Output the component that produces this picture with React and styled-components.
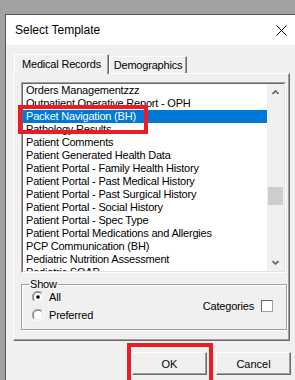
import React from "react";
import styled, { createGlobalStyle } from "styled-components";

const GlobalStyle = createGlobalStyle`
  html, body {
    margin: 0;
    padding: 0;
    overflow: hidden;
    background: #a2a2a2;
  }
  body {
    width: 295px;
    height: 380px;
  }
`;

const Page = styled.div`
  width: 295px;
  height: 380px;
  overflow: hidden;
  padding: 14px 0 0 5px;
  box-sizing: border-box;
`;

const Dialog = styled.div`
  width: 296px;
  height: 366px;
  border-top: 1px solid #555;
  border-left: 1px solid #555;
  background: #f0f0f0;
  display: flex;
  flex-direction: column;
  font-family: "Liberation Sans", Arial, sans-serif;
  color: #000;
`;

const TitleBar = styled.div`
  height: 30px;
  background: #fff;
  display: flex;
  align-items: center;
  justify-content: space-between;
  padding: 0 15px 0 9px;
`;

const Title = styled.span`
  font-size: 12px;
`;

const Body = styled.div`
  padding: 9px 0 0 7px;
  display: flex;
  flex-direction: column;
`;

const TabStrip = styled.div`
  display: flex;
  align-items: flex-end;
  height: 19px;
  padding-left: 1px;
  position: relative;
  z-index: 1;
`;

const Tab = styled.div`
  box-sizing: border-box;
  height: ${(p) => (p.$active ? "20px" : "17px")};
  margin-bottom: ${(p) => (p.$active ? "-1px" : "0")};
  width: ${(p) => p.$w}px;
  background: #f0f0f0;
  border-top: 1px solid #fff;
  border-left: 1px solid #fff;
  border-right: 1px solid #696969;
  box-shadow: inset -1px 0 #a0a0a0;
  font-size: 11px;
  letter-spacing: -0.2px;
  display: flex;
  align-items: center;
  justify-content: center;
  padding-bottom: ${(p) => (p.$active ? "2px" : "0")};
`;

const Panel = styled.div`
  box-sizing: border-box;
  width: 277px;
  height: 268px;
  border-top: 1px solid #fff;
  border-left: 1px solid #fff;
  border-right: 1px solid #696969;
  border-bottom: 1px solid #696969;
  box-shadow: inset -1px -1px #a0a0a0;
  padding: 8px 0 0 7px;
  display: flex;
  flex-direction: column;
`;

const ListBox = styled.div`
  position: relative;
  box-sizing: border-box;
  width: 265px;
  height: 191px;
  border-top: 1px solid #a0a0a0;
  border-left: 1px solid #a0a0a0;
  border-right: 1px solid #fff;
  border-bottom: 1px solid #fff;
`;

const ListInner = styled.div`
  box-sizing: border-box;
  height: 100%;
  border-top: 1px solid #696969;
  border-left: 1px solid #696969;
  border-right: 1px solid #e3e3e3;
  border-bottom: 1px solid #e3e3e3;
  background: #fff;
  display: flex;
`;

const Rows = styled.div`
  flex: 1;
  overflow: hidden;
`;

const Row = styled.div`
  height: 13px;
  line-height: 13px;
  padding-left: 3px;
  font-size: 11px;
  letter-spacing: -0.2px;
  white-space: nowrap;
  background: ${(p) => (p.$selected ? "#0078d7" : "transparent")};
  color: ${(p) => (p.$selected ? "#fff" : "#000")};
`;

const ScrollBar = styled.div`
  width: 17px;
  background: #f0f0f0;
  display: flex;
  flex-direction: column;
`;

const ScrollArrow = styled.div`
  height: 17px;
  display: flex;
  align-items: center;
  justify-content: center;
`;

const Track = styled.div`
  flex: 1;
`;

const Thumb = styled.div`
  margin: ${(p) => p.$top}px 1px 0;
  height: 18px;
  background: #cdcdcd;
`;

const Callout = styled.div`
  position: absolute;
  left: ${(p) => p.$x}px;
  top: ${(p) => p.$y}px;
  width: ${(p) => p.$w}px;
  height: ${(p) => p.$h}px;
  border: 4px solid #ed1c24;
  box-sizing: border-box;
  pointer-events: none;
`;

const GroupBox = styled.fieldset`
  box-sizing: border-box;
  width: 266px;
  height: 52px;
  margin: 5px 0 0 0;
  padding: 0;
  border: 1px solid #a0a0a0;
  box-shadow: inset 1px 1px #fff, 1px 1px #fff;
`;

const Legend = styled.legend`
  font-size: 11px;
  letter-spacing: -0.2px;
  line-height: 13px;
  padding: 0 1px;
  margin-left: 7px;
`;

const GroupContent = styled.div`
  height: 36px;
  margin-top: -3px;
  padding: 0 13px 0 10px;
  display: flex;
  align-items: center;
  justify-content: space-between;
`;

const RadioCol = styled.div`
  display: flex;
  flex-direction: column;
`;

const OptionRow = styled.label`
  height: 18px;
  display: flex;
  align-items: center;
  gap: 5px;
  font-size: 11px;
  letter-spacing: -0.2px;
`;

const CheckBox = styled.span`
  width: 12px;
  height: 12px;
  box-sizing: border-box;
  background: #fff;
  border-top: 1px solid #696969;
  border-left: 1px solid #696969;
  border-right: 1px solid #a0a0a0;
  border-bottom: 1px solid #a0a0a0;
`;

const CheckRow = styled.label`
  display: flex;
  align-items: center;
  gap: 7px;
  font-size: 11px;
  letter-spacing: -0.2px;
`;

const ButtonRow = styled.div`
  display: flex;
  gap: 9px;
  margin: 11px 0 0 119px;
`;

const ButtonWrap = styled.div`
  position: relative;
`;

const Button = styled.button`
  width: 75px;
  height: 23px;
  box-sizing: border-box;
  padding: 0;
  background: #f0f0f0;
  border-top: 1px solid #fff;
  border-left: 1px solid #fff;
  border-right: 1px solid #696969;
  border-bottom: 1px solid #696969;
  box-shadow: inset -1px -1px #a0a0a0;
  font-family: "Liberation Sans", Arial, sans-serif;
  font-size: 11px;
  color: #000;
`;

const Close = () => (
  <svg width="11" height="11" viewBox="0 0 11 11">
    <path d="M0.5 0.5 L10.5 10.5 M10.5 0.5 L0.5 10.5" stroke="#000" strokeWidth="1" />
  </svg>
);

const Chevron = ({ down }) => (
  <svg width="7" height="5" viewBox="0 0 7 5">
    <polyline
      points={down ? "0.5,1 3.5,4 6.5,1" : "0.5,4 3.5,1 6.5,4"}
      fill="none"
      stroke="#606060"
      strokeWidth="1.6"
    />
  </svg>
);

const Radio = ({ checked }) => (
  <svg width="12" height="12" viewBox="0 0 12 12">
    <circle cx="6" cy="6" r="5.5" fill="#fff" />
    <path d="M1.8 10.2 A5.5 5.5 0 0 1 10.2 1.8" fill="none" stroke="#a0a0a0" />
    <path d="M10.2 1.8 A5.5 5.5 0 0 1 1.8 10.2" fill="none" stroke="#fff" />
    <path d="M2.6 9.4 A4.5 4.5 0 0 1 9.4 2.6" fill="none" stroke="#696969" />
    <path d="M9.4 2.6 A4.5 4.5 0 0 1 2.6 9.4" fill="none" stroke="#e3e3e3" />
    {checked && <circle cx="6" cy="6" r="1.8" fill="#000" />}
  </svg>
);

const items = [
  "Orders Managementzzz",
  "Outpatient Operative Report - OPH",
  "Packet Navigation (BH)",
  "Pathology Results",
  "Patient Comments",
  "Patient Generated Health Data",
  "Patient Portal - Family Health History",
  "Patient Portal - Past Medical History",
  "Patient Portal - Past Surgical History",
  "Patient Portal - Social History",
  "Patient Portal - Spec Type",
  "Patient Portal Medications and Allergies",
  "PCP Communication (BH)",
  "Pediatric Nutrition Assessment",
  "Pediatric SOAP",
];

export default function App() {
  return (
    <>
      <GlobalStyle />
      <Page>
        <Dialog>
          <TitleBar>
            <Title>Select Template</Title>
            <Close />
          </TitleBar>
          <Body>
            <TabStrip>
              <Tab $active $w={95}>Medical Records</Tab>
              <Tab $w={78}>Demographics</Tab>
            </TabStrip>
            <Panel>
              <ListBox>
                <ListInner>
                  <Rows>
                    {items.map((item, i) => (
                      <Row key={item} $selected={i === 2}>
                        {item}
                      </Row>
                    ))}
                  </Rows>
                  <ScrollBar>
                    <ScrollArrow>
                      <Chevron />
                    </ScrollArrow>
                    <Track>
                      <Thumb $top={86} />
                    </Track>
                    <ScrollArrow>
                      <Chevron down />
                    </ScrollArrow>
                  </ScrollBar>
                </ListInner>
                <Callout $x={-4} $y={22} $w={130} $h={29} />
              </ListBox>
              <GroupBox>
                <Legend>Show</Legend>
                <GroupContent>
                  <RadioCol>
                    <OptionRow>
                      <Radio checked />
                      All
                    </OptionRow>
                    <OptionRow>
                      <Radio />
                      Preferred
                    </OptionRow>
                  </RadioCol>
                  <CheckRow>
                    Categories
                    <CheckBox />
                  </CheckRow>
                </GroupContent>
              </GroupBox>
            </Panel>
            <ButtonRow>
              <ButtonWrap>
                <Button>OK</Button>
                <Callout $x={-5} $y={-9} $w={86} $h={50} />
              </ButtonWrap>
              <Button>Cancel</Button>
            </ButtonRow>
          </Body>
        </Dialog>
      </Page>
    </>
  );
}
